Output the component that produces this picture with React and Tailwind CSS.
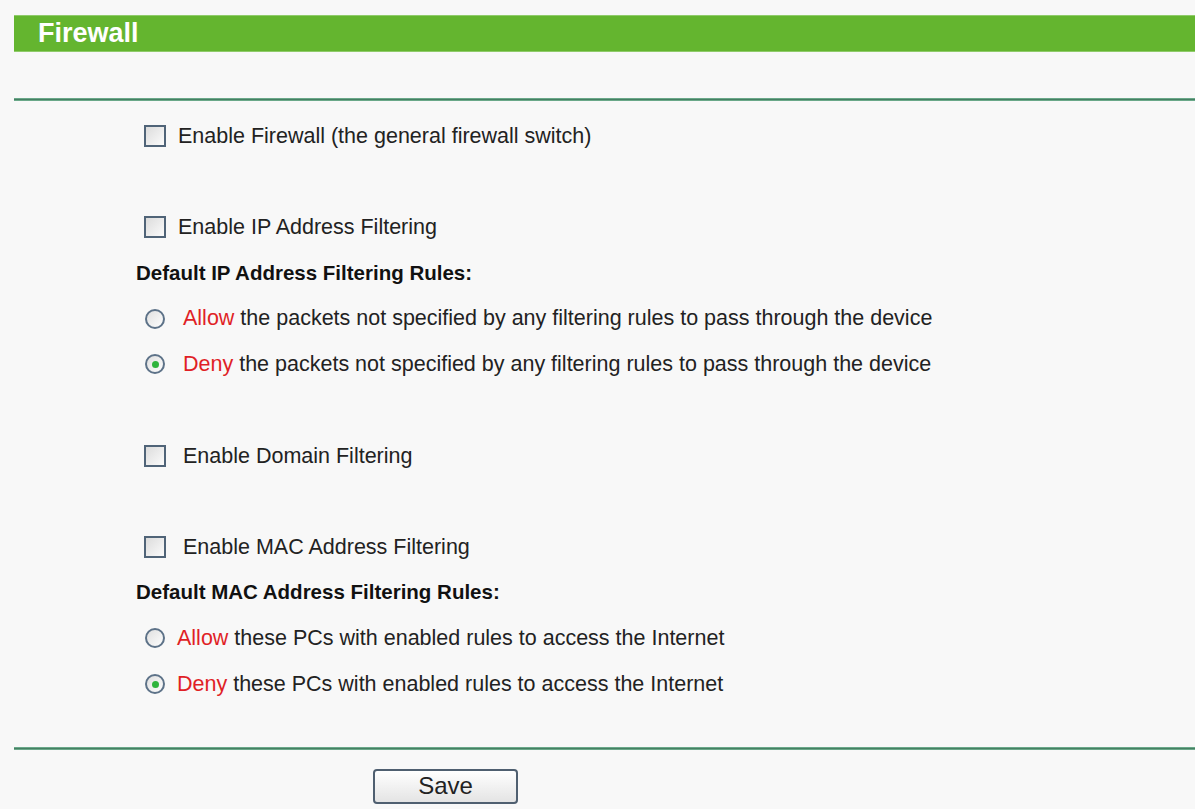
import React, { useState } from "react";

const font = { fontFamily: '"Liberation Sans", Arial, sans-serif' };

const Checkbox = ({ checked, onChange }) => (
  <button
    type="button"
    onClick={onChange}
    className="w-[22px] h-[22px] shrink-0 border-2 border-[#506478] bg-gradient-to-br from-[#dcdcdc] to-[#fbfbfb] flex items-center justify-center"
  >
    {checked && <span className="w-[10px] h-[10px] bg-[#3f9b3a]" />}
  </button>
);

const Radio = ({ checked, onChange }) => (
  <button
    type="button"
    onClick={onChange}
    className="w-[20px] h-[20px] shrink-0 rounded-full border-2 border-[#5d7288] bg-gradient-to-br from-[#e0e0e0] to-[#fdfdfd] flex items-center justify-center"
  >
    {checked && <span className="w-[7px] h-[7px] rounded-full bg-[#2fb43c]" />}
  </button>
);

const Row = ({ children, className = "" }) => (
  <div className={`h-[45.7px] flex items-center ${className}`}>{children}</div>
);

export default function App() {
  const [firewall, setFirewall] = useState(false);
  const [ipFilter, setIpFilter] = useState(false);
  const [domainFilter, setDomainFilter] = useState(false);
  const [macFilter, setMacFilter] = useState(false);
  const [ipRule, setIpRule] = useState("deny");
  const [macRule, setMacRule] = useState("deny");

  return (
    <div className="min-h-screen w-full bg-[#f8f8f8] pt-[15px] pl-[14px] text-[#222]" style={font}>
      <div className="h-[37px] bg-[#64b52f] border-y border-[#8fcb6a] flex items-center pl-[24px]">
        <h1 className="text-white text-[27px] font-bold leading-none">Firewall</h1>
      </div>

      <div className="h-[46px]" />
      <div className="h-[3px] bg-[#467f63] border-y border-[#6aa889]" />

      <div className="pt-[12px] text-[21.5px]">
        <Row className="pl-[130px] gap-[12px]">
          <Checkbox checked={firewall} onChange={() => setFirewall(!firewall)} />
          <span>Enable Firewall (the general firewall switch)</span>
        </Row>
        <Row />
        <Row className="pl-[130px] gap-[12px]">
          <Checkbox checked={ipFilter} onChange={() => setIpFilter(!ipFilter)} />
          <span>Enable IP Address Filtering</span>
        </Row>
        <Row className="pl-[122px]">
          <span className="font-bold text-[20.5px] text-[#111]">Default IP Address Filtering Rules:</span>
        </Row>
        <Row className="pl-[131px] gap-[18px]">
          <Radio checked={ipRule === "allow"} onChange={() => setIpRule("allow")} />
          <span>
            <span className="text-[#e01f26]">Allow</span> the packets not specified by any filtering rules to pass through the device
          </span>
        </Row>
        <Row className="pl-[131px] gap-[18px]">
          <Radio checked={ipRule === "deny"} onChange={() => setIpRule("deny")} />
          <span>
            <span className="text-[#e01f26]">Deny</span> the packets not specified by any filtering rules to pass through the device
          </span>
        </Row>
        <Row />
        <Row className="pl-[130px] gap-[17px]">
          <Checkbox checked={domainFilter} onChange={() => setDomainFilter(!domainFilter)} />
          <span>Enable Domain Filtering</span>
        </Row>
        <Row />
        <Row className="pl-[130px] gap-[17px]">
          <Checkbox checked={macFilter} onChange={() => setMacFilter(!macFilter)} />
          <span>Enable MAC Address Filtering</span>
        </Row>
        <Row className="pl-[122px]">
          <span className="font-bold text-[20.5px] text-[#111]">Default MAC Address Filtering Rules:</span>
        </Row>
        <Row className="pl-[131px] gap-[12px]">
          <Radio checked={macRule === "allow"} onChange={() => setMacRule("allow")} />
          <span>
            <span className="text-[#e01f26]">Allow</span> these PCs with enabled rules to access the Internet
          </span>
        </Row>
        <Row className="pl-[131px] gap-[12px]">
          <Radio checked={macRule === "deny"} onChange={() => setMacRule("deny")} />
          <span>
            <span className="text-[#e01f26]">Deny</span> these PCs with enabled rules to access the Internet
          </span>
        </Row>
      </div>

      <div className="h-[40px]" />
      <div className="h-[3px] bg-[#467f63] border-y border-[#6aa889]" />

      <div className="pt-[19px] pl-[359px]">
        <button
          type="button"
          className="w-[145px] h-[35px] rounded-[4px] border-2 border-[#4f5f70] bg-gradient-to-b from-white to-[#e4e4e4] text-[24px] leading-none text-[#222]"
        >
          Save
        </button>
      </div>
    </div>
  );
}
